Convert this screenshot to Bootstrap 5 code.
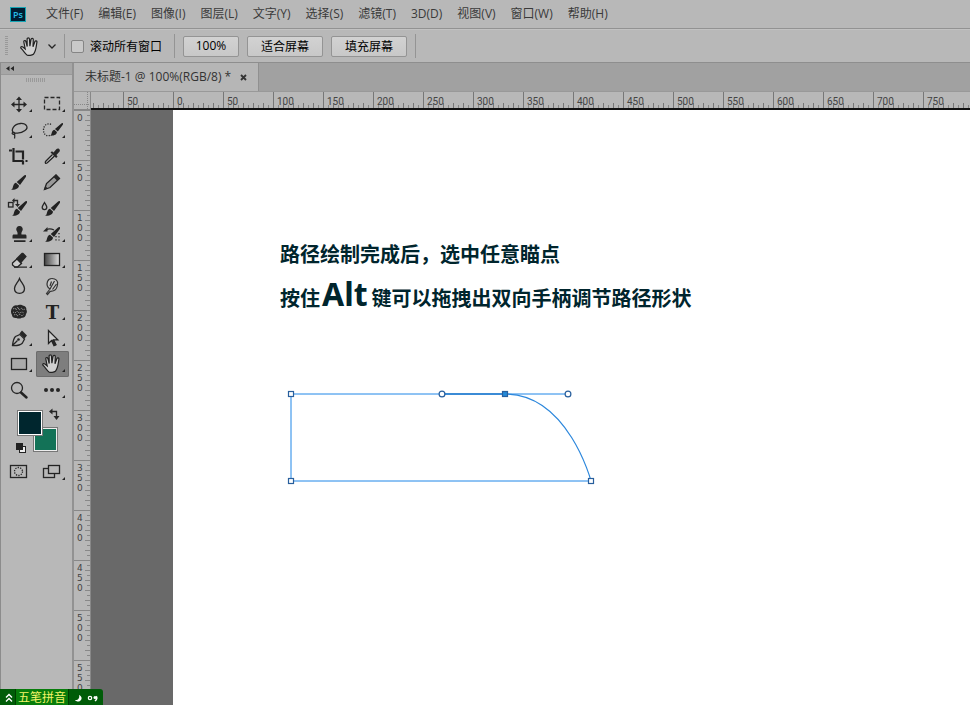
<!DOCTYPE html>
<html lang="zh-CN">
<head>
<meta charset="utf-8">
<meta name="viewport" content="width=device-width, initial-scale=1">
<title>未标题-1</title>
<link href="https://cdn.jsdelivr.net/npm/bootstrap@5.3.0/dist/css/bootstrap.min.css" rel="stylesheet">
<style>
:root{--panel:#b8b8b8;--ui:"Open Sans","Noto Sans CJK SC",sans-serif}
body{background:var(--panel);color:#333;font:12px/16px var(--ui)}
.menubar{height:29px;padding:0 10px;border-bottom:1px solid #929292}
.menubar svg{margin-right:20px}
.menubar ul{gap:15px}
.menubar a{color:#3a3a3a;text-decoration:none}
.options{height:34px;border-bottom:1px solid #8e8e8e;border-top:1px solid #c2c2c2;color:#000;font-family:"Noto Sans CJK SC",sans-serif}
.grip{width:3px;height:20px;margin:0 12px 0 5px;background:repeating-linear-gradient(#999 0 1px,transparent 1px 2px)}
.divider{width:1px;height:24px;background:#949494}
.options .form-check-input{width:13px;height:13px;margin:0 6px;background-color:#c9c9c9;border:1px solid #858585;border-radius:2px}
.options label{margin-right:12px}
.zoombtn{height:21px;padding:0;border:1px solid #949494;border-radius:2px;background:linear-gradient(#d2d2d2,#c8c8c8);color:#000;font:12px/18px "Noto Sans CJK SC",sans-serif}
.zw-s{width:56px;font-family:var(--ui)}.zw-l{width:76px}
.toolbox{width:74px;border-right:2px solid #929292;border-left:1px solid #8c8c8c}
.collapse-strip{height:12px;background:#a6a6a6;border:0;border-bottom:1px solid #999;padding:0 0 0 5px}
.toolgrip{width:19px;height:4px;margin:3px auto 9px 25px;background:repeating-linear-gradient(90deg,#999 0 1px,transparent 1px 2px)}
.tools{display:grid;grid-template-columns:33px 33px;padding-left:2px}
.tools button{height:26px;padding:0;border:0;background:none;border-radius:2px;color:#262626}
.tools button.active{background:#7e7e7e;box-shadow:inset 0 0 0 1px #6c6c6c}
.tools svg,.swatches svg{display:block}
.ln{fill:none;stroke:#262626;stroke-width:1.3}
.fl{fill:#262626}
.swatches{padding-left:13px}
.tabstrip{height:29px;background:#a1a1a1;border-bottom:1px solid #999}
.doctab{width:185px;padding:0 11px;background:#b6b6b6;border-right:1px solid #909090}
.doctab button{border:0;padding:0;background:none;line-height:0}
.corner{width:17px;height:18px;background:repeating-linear-gradient(#888 0 1px,transparent 1px 2px) 13px 0/1px 100% no-repeat,repeating-linear-gradient(90deg,#888 0 1px,transparent 1px 2px) 0 12px/100% 1px no-repeat;border-right:1px solid #888;border-bottom:1px solid #888}
.hruler{height:18px;border-bottom:2px solid #111}
.hruler ol{margin-left:-18px;height:16px}
.hruler li{flex:0 0 50px;border-left:1px solid #777;padding-left:3px;font:10px/19px Roboto,sans-serif;color:#444;
background:repeating-linear-gradient(90deg,transparent 0 9px,#777 9px 10px) 0 100%/100% 5px no-repeat,repeating-linear-gradient(90deg,transparent 0 4px,#888 4px 5px) 0 100%/100% 3px no-repeat}
.vruler{width:17px;border-right:1px solid #888}
.vruler li{flex:0 0 50px;border-top:1px solid #888;padding:2px 7px 0 3px;font:9px/10px "DejaVu Sans",sans-serif;color:#444;
background:repeating-linear-gradient(transparent 0 9px,#888 9px 10px) 100% 0/5px 100% no-repeat,repeating-linear-gradient(transparent 0 4px,#888 4px 5px) 100% 0/3px 100% no-repeat}
.paste{width:82px;background:#696969}
.artboard{background:#fff;padding:130px 0 0 107px;color:#00252d;font:700 20px/28px "Noto Sans CJK SC",sans-serif}
.artboard h1{font:inherit;margin:0}
.artboard p{margin:2px 0 0;line-height:48px}
.keyname{font:700 32px/48px "Noto Sans",sans-serif;margin:0 4px 0 2px}
.artboard svg{display:block;margin:66px 0 0 4px}
.ime{left:0;bottom:0;height:16px;background:#005c08;border-radius:0 3px 0 0;color:#f4f46a;z-index:5;font:12px/16px "Noto Sans CJK SC",sans-serif}
.ime span{height:16px;background:#087d0b;padding:0 2px 0 2px;border-left:1px solid #003f00;border-right:1px solid #003f00}
</style>
<script src="https://cdn.jsdelivr.net/npm/bootstrap@5.3.0/dist/js/bootstrap.bundle.min.js"></script>
</head>
<body class="vh-100 d-flex flex-column overflow-hidden position-relative">
<svg class="d-none" aria-hidden="true">
<symbol id="hand" viewBox="0 0 20 19"><path d="M7 17.900C5 16.500 3.500 13.500 1 11.300c-.9-1.300.7-2.200 1.900-1.300L5.200 11.900 3.800 4.900c-.2-1.500 1.700-1.900 2.100-.4L7.200 9.500 7.100 2.100c0-1.700 2.300-1.700 2.400 0L9.900 9.200 11 2.300c.3-1.500 2.400-1.300 2.300.4L13 9.800l1.900-5.200c.6-1.300 2.300-.8 2 .7-.7 3.500-.6 8.500-3.500 12-1.400 1.200-5 1.400-6.400.6z" fill="#d0d0d0" stroke="#222" stroke-width="1.200"/></symbol>
<symbol id="more" viewBox="0 0 3 3"><path d="M3 0v3H0z" fill="#222"/></symbol>
<symbol id="brush" viewBox="0 0 16 16"><path d="M15.800.2c.5.600.3 1.200 0 1.800L9.600 10.600 6.100 7.500 14 .5c.6-.5 1.300-.7 1.800-.3zM5.300 8.300l3.200 2.800c.1 3.200-3.800 5.100-8.500 4.500 2.300-1 1.500-2.500 2.600-4.800.6-1.300 1.500-2.200 2.700-2.500z" fill="#222"/></symbol>
</svg>

<nav class="menubar d-flex align-items-center flex-shrink-0" aria-label="主菜单">
<svg width="16" height="15" viewBox="0 0 16 15"><rect x=".5" y=".5" width="15" height="14" fill="#001d33" stroke="#16a5b5"/><text x="3" y="11" font-family="Open Sans" font-size="9" font-weight="600" fill="#27bce8">Ps</text></svg>
<ul class="list-unstyled d-flex mb-0 text-nowrap">
<li><a href="#">文件(F)</a></li><li><a href="#">编辑(E)</a></li><li><a href="#">图像(I)</a></li><li><a href="#">图层(L)</a></li><li><a href="#">文字(Y)</a></li><li><a href="#">选择(S)</a></li><li><a href="#">滤镜(T)</a></li><li><a href="#">3D(D)</a></li><li><a href="#">视图(V)</a></li><li><a href="#">窗口(W)</a></li><li><a href="#">帮助(H)</a></li>
</ul>
</nav>

<div class="options d-flex align-items-center flex-shrink-0">
<span class="grip"></span>
<svg width="20" height="19"><use href="#hand" width="20" height="19"/></svg>
<svg width="8" height="5" viewBox="0 0 8 5" class="mx-2 me-2"><path d="M.5.5 4 4 7.500.5" class="ln"/></svg>
<span class="divider"></span>
<input class="form-check-input" type="checkbox" id="scrollall"><label for="scrollall">滚动所有窗口</label>
<span class="divider me-2"></span>
<div class="d-flex gap-2 me-2"><button type="button" class="zoombtn zw-s">100%</button><button type="button" class="zoombtn zw-l">适合屏幕</button><button type="button" class="zoombtn zw-l">填充屏幕</button></div>
<span class="divider"></span>
</div>

<div class="d-flex flex-grow-1 overflow-hidden">
<aside class="toolbox flex-shrink-0 d-flex flex-column">
<button type="button" class="collapse-strip d-flex align-items-center" aria-label="折叠"><svg width="8" height="5" viewBox="0 0 8 5"><path d="M3.500 0v5L0 2.500zM8 0v5L4.500 2.500z" class="fl"/></svg></button>
<div class="toolgrip"></div>
<div class="tools">
<button type="button" aria-label="移动"><svg width="33" height="26"><path d="M16 8v11M10.500 13.500h11" class="ln" stroke-width="1.600"/><path d="M16 5.500l3 3.500h-6zM16 21.500l3-3.500h-6zM8 13.500l3.500-3v6zM24 13.500l-3.500-3v6z" class="fl"/><use href="#more" x="26" y="18" width="3" height="3"/></svg></button>
<button type="button" aria-label="选框"><svg width="33" height="26"><rect x="8.500" y="6.500" width="15" height="12" class="ln" stroke-dasharray="4 2"/><use href="#more" x="26" y="18" width="3" height="3"/></svg></button>
<button type="button" aria-label="套索"><svg width="33" height="26"><path d="M11 16c-4-3 0-9 6.500-9.500 6-.4 8.500 4 4.500 7-3 2.400-7 3-10.500 2.300-1.500-1.500-3.500.5-1.500 1.400 2 .8 2.500-1 1.300-1.700M11.500 17.500c.5 1.500.5 2.500 0 4" class="ln"/><use href="#more" x="26" y="18" width="3" height="3"/></svg></button>
<button type="button" aria-label="快速选择"><svg width="33" height="26"><path d="M15 7.500c-3-2-7.500.5-7.500 5.500s4 7 7 5" class="ln" stroke-dasharray="1.200 1.300"/><use href="#brush" x="14" y="6" width="13" height="13"/><use href="#more" x="26" y="18" width="3" height="3"/></svg></button>
<button type="button" aria-label="裁剪"><svg width="33" height="26"><path d="M10.500 5v13h10M6 7.500h3M12.500 8.500h7.500v8M20 18v3.500M22.500 18h2" fill="none" stroke="#222" stroke-width="2.200"/></svg></button>
<button type="button" aria-label="吸管"><svg width="33" height="26"><path d="M16.500 11.500 10 18c-1.500 1.800-.5 3 1.300 1.700L18.500 13" fill="#ccc" stroke="#222" stroke-width="1.300"/><path d="M14.500 9.500l1.500-1.300 1.500 1.300 3-3.500c1.800-1.700 4.500.7 2.900 2.700l-3 3.300 1.200 1.500-1.500 1.500z" class="fl"/><use href="#more" x="26" y="18" width="3" height="3"/></svg></button>
<button type="button" aria-label="画笔"><svg width="33" height="26"><use href="#brush" x="8" y="6" width="15" height="15"/></svg></button>
<button type="button" aria-label="铅笔"><svg width="33" height="26"><path d="M8.500 20.500l2-6 9.500-8.500 3.500 3.500-9.500 9z" fill="#999" stroke="#222" stroke-width="1.300"/><path d="M8 21l1.200-4 2.600 2.500zM17.500 8l2.500-2.600 4 4-2.800 2.400z" class="fl"/></svg></button>
<button type="button" aria-label="颜色替换"><svg width="33" height="26"><rect x="5.500" y="7.500" width="4.500" height="4.500" class="ln"/><path d="M10 5.500h4.500V10" class="ln"/><path d="M9 5.500l2.500-2.500v5zM12 9h5l-2.500 3z" class="fl"/><use href="#brush" x="9" y="6" width="15" height="15"/></svg></button>
<button type="button" aria-label="混合器画笔"><svg width="33" height="26"><path d="M8.500 7.500c-1.500 2.500-2.300 3.600-2.300 4.800 0 3 4.600 3 4.600 0 0-1.200-.9-2.300-2.300-4.800z" class="ln"/><use href="#brush" x="9" y="6" width="15" height="15"/></svg></button>
<button type="button" aria-label="图章"><svg width="33" height="26"><path d="M16.500 5a3.200 3.200 0 0 1 3 4.500c-.9 1.400-1.300 2.500-1 4H22c1 0 1.500.7 1.500 1.500v2.500h-14V15c0-.8.500-1.500 1.500-1.500h3.500c.3-1.500-.1-2.600-1-4a3.200 3.200 0 0 1 3-4.500zM11 19.300h11.500V21H11z" class="fl"/><use href="#more" x="26" y="18" width="3" height="3"/></svg></button>
<button type="button" aria-label="历史画笔"><svg width="33" height="26"><path d="M10 9c3-2 5-1.500 8 0" class="ln"/><path d="M7 10.500l4.500-4.500v4.500z" class="fl"/><use href="#brush" x="9" y="6" width="15" height="15"/><path d="M23 12v8M20 15v5" class="ln" stroke-dasharray="1.200 2"/><use href="#more" x="26" y="18" width="3" height="3"/></svg></button>
<button type="button" aria-label="橡皮擦"><svg width="33" height="26"><path d="M9.500 16l4.500-4 4.500 4.500-4 3.500h-2.500L9.500 18z" fill="#ccc" stroke="#222" stroke-width="1.300"/><path d="M13 11.500l5.500-5.500c.7-.5 1.400-.4 2 0l3.300 3.500-6 7zM11 19.500h13v1.300H11z" class="fl"/><use href="#more" x="26" y="18" width="3" height="3"/></svg></button>
<button type="button" aria-label="渐变"><svg width="33" height="26"><defs><linearGradient id="gr"><stop stop-color="#444"/><stop offset="1" stop-color="#ddd"/></linearGradient></defs><rect x="8.500" y="6.500" width="15" height="12" fill="url(#gr)" stroke="#222" stroke-width="1.300"/><use href="#more" x="26" y="18" width="3" height="3"/></svg></button>
<button type="button" aria-label="模糊"><svg width="33" height="26"><path d="M16.500 5.500c-1.500 4-5 6.500-5 10 0 2.800 2 4.800 5 4.800s5-2 5-4.800c0-3.500-3.500-6-5-10z" class="ln"/></svg></button>
<button type="button" aria-label="涂抹"><svg width="33" height="26"><path d="M10.500 20.500l3.500-4.500c-2.500-1.500-3.500-4.500-2.500-7.500 1-2.500 4-3.500 7-2.500 2.500 1 3.500 3 3 5.500-.4 3-1.500 5.500-4 6.300-1.500.5-2.500 0-3.500.7l-2.500 3z" fill="#c6c6c6" stroke="#333" stroke-width="1.200"/><path d="M15.500 8.500 14 13M18.500 8l-4.500 8M20.500 11l-4 5.500" fill="none" stroke="#333" stroke-width="1.200"/></svg></button>
<button type="button" aria-label="海绵"><svg width="33" height="26"><path d="M9 9c1-2 3-3.200 5-2.600 2-1.200 5-.7 6.500.4 2 .5 3.200 2 2.800 3.700 1 1.500.7 3.500-.3 4.500-.2 2.500-2 4-4.200 3.700-2 1.300-4 1-5.300.2-2.500.5-4.500-1-4.500-3-1.500-2-1.200-5 0-6.900z" class="fl"/><path d="M10 10l2-1 1 2 2-3 1 3 3-2 1 2 2-1M10 13l2 1 2-2 2 2 3-1 2 1M11 16l2-1 1 2 3-2 2 2 2-2" fill="none" stroke="#aaa" stroke-width=".8" stroke-dasharray="1.300 1"/></svg></button>
<button type="button" aria-label="文字"><svg width="33" height="26"><text x="16.500" y="20" text-anchor="middle" font-family="DejaVu Serif,serif" font-weight="700" font-size="18" fill="#222">T</text><use href="#more" x="26" y="18" width="3" height="3"/></svg></button>
<button type="button" aria-label="钢笔"><svg width="33" height="26"><path d="M9.500 20.500c.5-4 .8-7 3-9l4.500-2 4.500 4.500-2.200 4.200c-2 2-5.800 2.500-9.800 2.300zm0 0 5-5" class="ln"/><circle cx="15.500" cy="14.500" r="1.300" class="fl"/><path d="M16.500 8.500l2.500-3 5 5-2.500 3z" class="fl"/><use href="#more" x="26" y="18" width="3" height="3"/></svg></button>
<button type="button" aria-label="路径选择"><svg width="33" height="26"><path d="M12.500 5.500v13l3-3 2.500 5.200 2-1-2.500-4.900h4.300z" fill="#ccc" stroke="#222" stroke-width="1.300"/><path d="M15.500 15.500l2-1 2.800 5.500-2.200 1z" class="fl"/><use href="#more" x="26" y="18" width="3" height="3"/></svg></button>
<button type="button" aria-label="矩形"><svg width="33" height="26"><rect x="8.500" y="7.500" width="15" height="11" fill="#aaa" stroke="#222" stroke-width="1.300"/><use href="#more" x="26" y="18" width="3" height="3"/></svg></button>
<button type="button" aria-label="抓手" class="active"><svg width="33" height="26"><use href="#hand" x="6" y="3" width="20" height="19"/><use href="#more" x="26" y="18" width="3" height="3"/></svg></button>
<button type="button" aria-label="缩放"><svg width="33" height="26"><circle cx="14" cy="11" r="5.500" class="ln"/><path d="M18 15.500l5.500 5" stroke="#222" stroke-width="2.500" stroke-linecap="round"/></svg></button>
<button type="button" aria-label="更多"><svg width="33" height="26"><g class="fl"><circle cx="10" cy="13" r="2"/><circle cx="16" cy="13" r="2"/><circle cx="22" cy="13" r="2"/></g><use href="#more" x="26" y="18" width="3" height="3"/></svg></button>
</div>
<div class="swatches">
<svg width="50" height="56" viewBox="14 403 50 56"><rect x="33.500" y="427.500" width="24" height="24" fill="#137257" stroke="#777"/><rect x="34.500" y="428.500" width="22" height="22" fill="none" stroke="#eee"/><rect x="17.500" y="410.500" width="25" height="25" fill="#00262e" stroke="#777"/><rect x="18.500" y="411.500" width="23" height="23" fill="none" stroke="#fff"/><path d="M51 411.500h5.500v6" class="ln"/><path d="M49 411.500l3.500-3v6zM53.500 416h6l-3 4z" class="fl"/><rect x="19.500" y="446.500" width="6" height="6" fill="#eee" stroke="#222"/><rect x="16" y="443" width="7" height="7" fill="#222"/></svg>
</div>
<div class="tools">
<button type="button" aria-label="快速蒙版"><svg width="33" height="26"><rect x="7.500" y="6.500" width="16" height="12" class="ln"/><circle cx="15.500" cy="12.500" r="4" class="ln" stroke-dasharray="1.300 1.200"/></svg></button>
<button type="button" aria-label="屏幕模式"><svg width="33" height="26"><rect x="7.500" y="9.500" width="11" height="9" class="ln"/><rect x="12.500" y="6.500" width="11" height="8" fill="#b8b8b8" stroke="#222" stroke-width="1.300"/><use href="#more" x="26" y="18" width="3" height="3"/></svg></button>
</div>
</aside>

<main class="flex-grow-1 d-flex flex-column overflow-hidden">
<div class="tabstrip d-flex flex-shrink-0"><div class="doctab d-flex align-items-center justify-content-between text-nowrap"><span>未标题-1 @ 100%(RGB/8) *</span><button type="button" aria-label="关闭"><svg width="7" height="7" viewBox="0 0 7 7"><path d="M1 1l5 5M6 1 1 6" stroke="#333" stroke-width="1.800"/></svg></button></div></div>
<div class="d-flex flex-shrink-0"><div class="corner flex-shrink-0"></div>
<div class="hruler flex-grow-1 overflow-hidden"><ol class="list-unstyled d-flex mb-0"><li></li><li>50</li><li>0</li><li>50</li><li>100</li><li>150</li><li>200</li><li>250</li><li>300</li><li>350</li><li>400</li><li>450</li><li>500</li><li>550</li><li>600</li><li>650</li><li>700</li><li>750</li></ol></div></div>
<div class="d-flex flex-grow-1 overflow-hidden">
<ol class="vruler list-unstyled d-flex flex-column mb-0 flex-shrink-0"><li>0</li><li>5<br>0</li><li>1<br>0<br>0</li><li>1<br>5<br>0</li><li>2<br>0<br>0</li><li>2<br>5<br>0</li><li>3<br>0<br>0</li><li>3<br>5<br>0</li><li>4<br>0<br>0</li><li>4<br>5<br>0</li><li>5<br>0<br>0</li><li>5<br>5<br>0</li></ol>
<div class="paste flex-shrink-0"></div>
<section class="artboard flex-grow-1 text-nowrap overflow-hidden">
<h1>路径绘制完成后，选中任意瞄点</h1>
<p>按住<span class="keyname">Alt</span>键可以拖拽出双向手柄调节路径形状</p>
<svg width="314" height="98" viewBox="284 388 314 98" role="img" aria-label="路径"><g fill="none"><path d="M505 394H291V481H591M505 394H568" stroke="#1f86e8"/><path d="M442 394h63" stroke="#1f78cc" stroke-width="1.500"/><path d="M505 394C568 394 591 481 591 481" stroke="#2c87dc" stroke-width="1.200"/></g><g fill="#fff" stroke="#285f9d" stroke-width="1.200"><rect x="288.500" y="391.500" width="5" height="5"/><rect x="288.500" y="478.500" width="5" height="5"/><rect x="588.500" y="478.500" width="5" height="5"/><circle cx="442" cy="394" r="2.900"/><circle cx="568" cy="394" r="2.900"/><rect x="502.500" y="391.500" width="5" height="5" fill="#2289d8"/></g></svg>
</section>
</div>
</main>
</div>

<div class="ime position-absolute d-flex"><svg width="15" height="16" viewBox="0 0 15 16"><path d="M6 8.500l3-3 3 3M6 12.500l3-3 3 3" fill="none" stroke="#fff" stroke-width="1.400"/></svg><span>五笔拼音</span><svg width="34" height="16" viewBox="70 0 34 16"><path d="M80 6c3 1 3.500 4.500 1 6-1.800 1-4 .5-5-1 3 .5 5-2 4-5z" fill="#fff"/><circle cx="91" cy="9" r="1.700" fill="none" stroke="#fff" stroke-width="1.200"/><path d="M97 7.500c1.500.5 1 3-1 4.500" fill="none" stroke="#fff" stroke-width="1.500"/><circle cx="96" cy="8.500" r="1.500" fill="#fff"/></svg></div>
</body>
</html>
